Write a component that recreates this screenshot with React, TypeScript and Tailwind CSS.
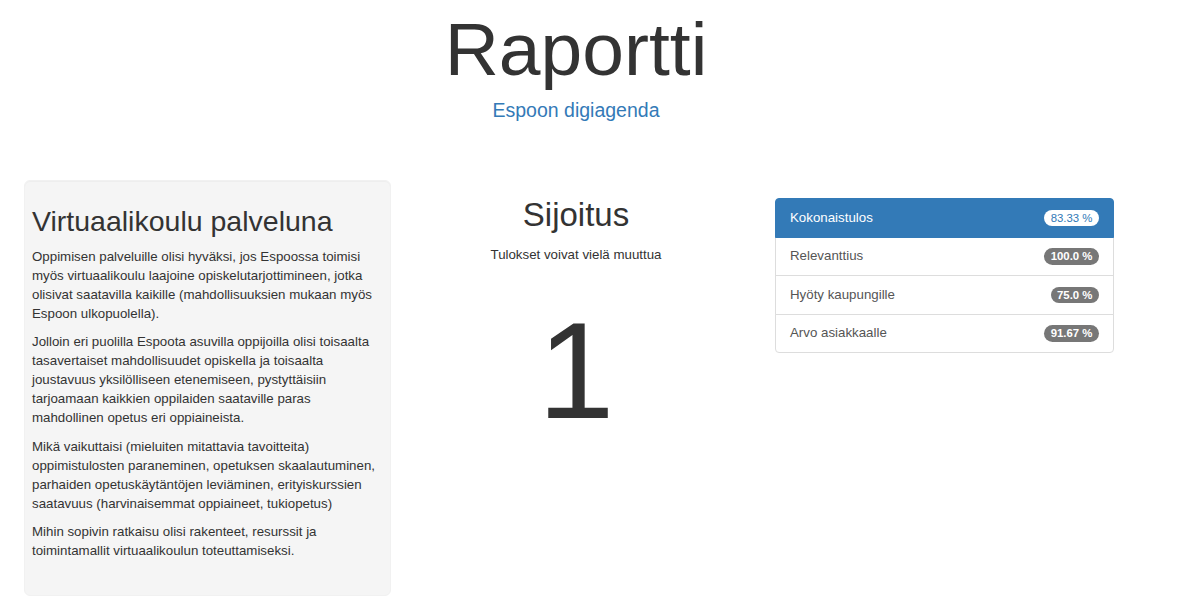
import React from "react";

const scores = [
  { label: "Relevanttius", value: "100.0 %" },
  { label: "Hyöty kaupungille", value: "75.0 %" },
  { label: "Arvo asiakkaalle", value: "91.67 %" },
];

export default function App() {
  return (
    <div className="min-h-[597px] bg-white font-['Liberation_Sans',Arial,sans-serif] text-[#333]">
      <div className="w-[1152px]">
        {/* page heading */}
        <header className="flex h-[180px] flex-col items-center pt-[7px]">
          <h1 className="m-0 text-[75px] font-normal leading-[84px] text-[#333]">Raportti</h1>
          <p className="m-0 mt-[8px] text-[19.5px] leading-[22px] text-[#337ab7]">Espoon digiagenda</p>
        </header>

        <div className="flex items-start pl-[24px]">
          {/* description well */}
          <section className="h-[416px] w-[367px] shrink-0 rounded-[6px] border border-[#f1f1f1] bg-[#f5f5f5] px-[7px] pt-[18px] shadow-[inset_0_1px_1px_rgba(0,0,0,0.03)]">
            <h2 className="m-0 mt-[7px] mb-[9.5px] text-[28.5px] font-normal leading-[31px] text-[#333]">
              Virtuaalikoulu palveluna
            </h2>
            <div className="pr-[2px] text-[13.3px] leading-[19px]">
              <p className="m-0 mb-[9.5px]">
                Oppimisen palveluille olisi hyväksi, jos Espoossa toimisi myös virtuaalikoulu laajoine opiskelutarjottimineen, jotka olisivat saatavilla kaikille (mahdollisuuksien mukaan myös Espoon ulkopuolella).
              </p>
              <p className="m-0 mb-[9.5px]">
                Jolloin eri puolilla Espoota asuvilla oppijoilla olisi toisaalta tasavertaiset mahdollisuudet opiskella ja toisaalta joustavuus yksilölliseen etenemiseen, pystyttäisiin tarjoamaan kaikkien oppilaiden saataville paras mahdollinen opetus eri oppiaineista.
              </p>
              <p className="m-0 mb-[9.5px]">
                Mikä vaikuttaisi (mieluiten mitattavia tavoitteita) oppimistulosten paraneminen, opetuksen skaalautuminen, parhaiden opetuskäytäntöjen leviäminen, erityiskurssien saatavuus (harvinaisemmat oppiaineet, tukiopetus)
              </p>
              <p className="m-0 mb-[9.5px]">
                Mihin sopivin ratkaisu olisi rakenteet, resurssit ja toimintamallit virtuaalikoulun toteuttamiseksi.
              </p>
            </div>
          </section>

          {/* ranking */}
          <section className="flex w-[370px] shrink-0 flex-col items-center pt-[17px]">
            <h2 className="m-0 text-[33px] font-normal leading-[36px] text-[#333]">Sijoitus</h2>
            <p className="m-0 mt-[12px] text-[13.3px] leading-[19px]">Tulokset voivat vielä muuttua</p>
            <div className="mt-[37px] text-[138px] leading-[138px] text-[#333]">1</div>
          </section>

          {/* score list */}
          <section className="ml-[14px] mt-[18px] flex w-[339px] shrink-0 flex-col text-[13.3px]">
            <div className="relative z-10 -mb-px flex h-[39.5px] items-center justify-between rounded-t-[4px] border border-[#337ab7] bg-[#337ab7] px-[14px] text-white">
              <span>Kokonaistulos</span>
              <span className="rounded-full bg-white px-[6.5px] py-[2px] text-[11.4px] leading-[12.5px] text-[#337ab7]">
                83.33 %
              </span>
            </div>
            {scores.map((s, i) => (
              <div
                key={s.label}
                className={
                  "-mb-px flex h-[39.5px] items-center justify-between border border-[#ddd] bg-white px-[14px] text-[#555] " +
                  (i === scores.length - 1 ? "rounded-b-[4px]" : "")
                }
              >
                <span>{s.label}</span>
                <span className="rounded-full bg-[#777] px-[6.5px] py-[2px] text-[11.4px] font-bold leading-[12.5px] text-white">
                  {s.value}
                </span>
              </div>
            ))}
          </section>
        </div>
      </div>
    </div>
  );
}
